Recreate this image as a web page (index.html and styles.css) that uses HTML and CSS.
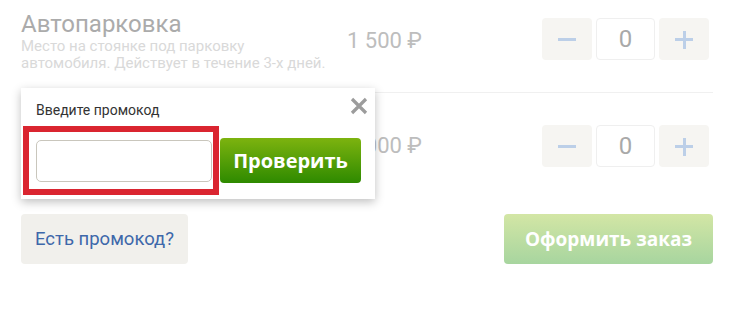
FILE: index.html
```html
<!DOCTYPE html>
<html lang="ru">
<head>
<meta charset="utf-8">
<link rel="stylesheet" href="styles.css">
</head>
<body>
<div class="cart">
  <div class="row row-first">
    <div class="info">
      <div class="title">Автопарковка</div>
      <div class="desc">Место на стоянке под парковку автомобиля. Действует в течение 3-х дней.</div>
    </div>
    <div class="price">1 500 ₽</div>
    <div class="qty">
      <div class="qbtn"><span class="minus"></span></div>
      <div class="qval">0</div>
      <div class="qbtn"><span class="plus"></span></div>
    </div>
  </div>
  <div class="row row-second">
    <div class="info">
      <div class="title">Трансфер</div>
      <div class="desc">Трансфер до аэропорта и обратно.</div>
    </div>
    <div class="price">3 000 ₽</div>
    <div class="qty">
      <div class="qbtn"><span class="minus"></span></div>
      <div class="qval">0</div>
      <div class="qbtn"><span class="plus"></span></div>
    </div>
  </div>
  <div class="footer">
    <button class="promo-link">Есть промокод?</button>
    <button class="order">Оформить заказ</button>
  </div>

  <div class="popup">
    <div class="popup-label">Введите промокод</div>
    <svg class="close" width="18" height="18" viewBox="0 0 18 18"><path d="M2 2L16 16M16 2L2 16" stroke="#9c9c9c" stroke-width="3.2" fill="none"/></svg>
    <div class="popup-form">
      <div class="highlight"><input class="code" type="text"></div>
      <button class="check">Проверить</button>
    </div>
    <span class="arrow"></span>
  </div>
</div>
</body>
</html>
```
FILE: styles.css
```css
* { box-sizing: border-box; }
html, body { margin: 0; padding: 0; background: #fff; }
body { font-family: Roboto, "Open Sans", sans-serif; }

.cart {
  position: relative;
  margin-left: 21px;
  width: 692px;
}

.row {
  display: flex;
  align-items: flex-start;
}
.row-first {
  height: 93px;
  padding-top: 10px;
  border-bottom: 1px solid #f0f0f0;
}
.row-second {
  height: 121px;
  padding-top: 32px;
}
.info { width: 326px; }
.title {
  font-size: 24px;
  line-height: 28px;
  color: #ababab;
}
.desc {
  font-size: 15px;
  line-height: 17px;
  color: #d9d9d9;
  width: 305px;
}
.price {
  width: 195px;
  font-size: 22px;
  line-height: 26px;
  color: #bdbdbd;
  padding-top: 18px;
}
.row-second .price { padding-top: 8px; }
.row-second .info { visibility: hidden; }
.row-first .qty { margin-top: 8px; }
.row-second .qty { margin-top: 0; }
.qty {
  display: flex;
  gap: 4px;
}
.qbtn {
  width: 50px;
  height: 42px;
  background: #f6f5f2;
  border-radius: 4px;
  position: relative;
}
.minus, .plus {
  position: absolute;
  left: 50%;
  top: 50%;
  width: 18px;
  height: 3px;
  margin: -1px 0 0 -9px;
  background: #bccfe8;
}
.plus::after {
  content: "";
  position: absolute;
  left: 7.5px;
  top: -7.5px;
  width: 3px;
  height: 18px;
  background: #bccfe8;
}
.qval {
  width: 59px;
  height: 42px;
  border: 1px solid #efefef;
  border-radius: 4px;
  display: flex;
  align-items: center;
  justify-content: center;
  font-size: 24px;
  color: #a9a9a9;
}

.footer {
  display: flex;
  justify-content: space-between;
}
.promo-link {
  width: 167px;
  height: 50px;
  border: 0;
  border-radius: 4px;
  background: #f1f0ec;
  color: #3e68aa;
  font-family: Roboto, sans-serif;
  font-size: 18.5px;
  padding: 0;
}
.order {
  width: 209px;
  height: 50px;
  border: 0;
  border-radius: 4px;
  background: linear-gradient(#d3e6a5, #a7d59f);
  color: #fff;
  font-family: "Open Sans", sans-serif;
  font-weight: bold;
  font-size: 19px;
  padding: 0;
}

.popup {
  position: absolute;
  left: 0;
  top: 88px;
  width: 354px;
  height: 111px;
  background: #fff;
  box-shadow: 0 3px 9px rgba(0,0,0,0.25);
  padding: 12px 14px 0 15px;
}
.popup-label {
  font-size: 14px;
  color: #333;
  line-height: 20px;
}
.close {
  position: absolute;
  right: 7px;
  top: 9px;
}
.popup-form {
  display: flex;
  align-items: center;
  margin-top: 18px;
}
.highlight {
  position: relative;
}
.highlight::before {
  content: "";
  position: absolute;
  left: -13px;
  top: -14px;
  right: -7px;
  bottom: -13px;
  border: 6px solid #da2530;
}
.code {
  display: block;
  width: 176px;
  height: 42px;
  border: 1px solid #c9c6bc;
  border-radius: 5px;
  background: #fff;
  margin: 0;
}
.check {
  margin-left: 8px;
  width: 141px;
  height: 45px;
  border: 0;
  border-radius: 4px;
  background: linear-gradient(#7db30f, #2e8a00);
  color: #fff;
  font-family: "Open Sans", sans-serif;
  font-weight: bold;
  font-size: 20px;
  padding: 0;
}
.arrow {
  position: absolute;
  left: 49px;
  bottom: -6px;
  width: 12px;
  height: 12px;
  background: #fff;
  transform: rotate(45deg);
  box-shadow: 3px 3px 4px rgba(0,0,0,0.15);
  z-index: -1;
}
```
